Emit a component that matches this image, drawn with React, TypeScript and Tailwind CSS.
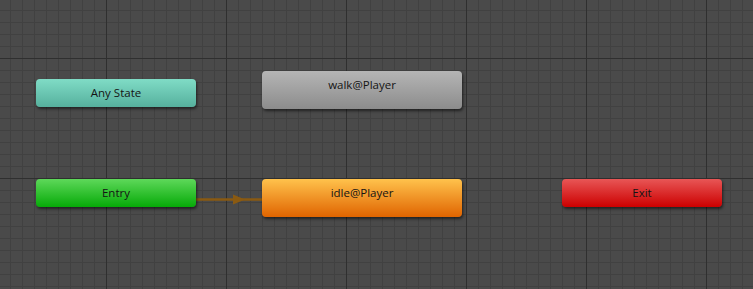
import React from "react";

type NodeProps = {
  label: string;
  x: number;
  y: number;
  w: string;
  h: string;
  bg: string;
};

function StateNode({ label, x, y, w, h, bg }: NodeProps) {
  return (
    <div
      className={`absolute ${w} ${h} ${bg} rounded-[4px] shadow-[1px_2px_3px_rgba(0,0,0,0.55)] flex justify-center text-[11.5px] leading-[27px] text-[#141414] font-['Open_Sans',sans-serif]`}
      style={{ left: x, top: y }}
    >
      {label}
    </div>
  );
}

export default function App() {
  return (
    <div className="relative w-[753px] h-[289px] overflow-hidden bg-[#4a4a4a] bg-[linear-gradient(to_right,#2f2f2f_1px,transparent_1px),linear-gradient(to_bottom,#2f2f2f_1px,transparent_1px),linear-gradient(to_right,#414141_1px,transparent_1px),linear-gradient(to_bottom,#414141_1px,transparent_1px)] bg-[size:120px_120px,120px_120px,12px_12px,12px_12px] bg-[position:106px_58px,106px_58px,10px_10px,10px_10px]">
      <svg className="absolute left-0 top-0" width="753" height="289">
        <line x1="196" y1="199.5" x2="262" y2="199.5" stroke="#8a5a12" strokeWidth="2.5" />
        <polygon points="233,194.5 245,199.5 233,204.5" fill="#8a5a12" />
      </svg>
      <StateNode label="Any State" x={36} y={79} w="w-[160px]" h="h-[28px]" bg="bg-[linear-gradient(to_bottom,#80dcc6,#56b09d)]" />
      <StateNode label="walk@Player" x={262} y={71} w="w-[200px]" h="h-[38px]" bg="bg-[linear-gradient(to_bottom,#b5b5b5,#8c8c8c)]" />
      <StateNode label="Entry" x={36} y={179} w="w-[160px]" h="h-[28px]" bg="bg-[linear-gradient(to_bottom,#5ed85a,#06aa08)]" />
      <StateNode label="idle@Player" x={262} y={179} w="w-[200px]" h="h-[38px]" bg="bg-[linear-gradient(to_bottom,#ffc24c,#e06400)]" />
      <StateNode label="Exit" x={562} y={179} w="w-[160px]" h="h-[28px]" bg="bg-[linear-gradient(to_bottom,#e85656,#cc0000)]" />
    </div>
  );
}
